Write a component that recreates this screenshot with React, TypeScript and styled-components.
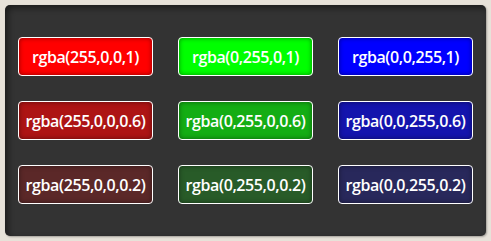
import React from 'react';
import styled, { createGlobalStyle } from 'styled-components';

const Global = createGlobalStyle`
  html, body {
    margin: 0;
    padding: 0;
    background: #e7e2d9;
  }
  body {
    font-family: "Open Sans", "Liberation Sans", sans-serif;
  }
`

const Page = styled.div`
  width: 491px;
  height: 241px;
  padding: 5px;
  box-sizing: border-box;
`

const Panel = styled.div`
  width: 481px;
  height: 231px;
  box-sizing: border-box;
  background: #333333;
  border-radius: 5px;
  box-shadow: inset 3px 3px 6px rgba(0, 0, 0, 0.45), 1px 1px 2px rgba(0, 0, 0, 0.3);
  padding: 32px 12px 0 13px;
  display: grid;
  grid-template-columns: repeat(3, 135px);
  grid-auto-rows: 39px;
  column-gap: 25px;
  row-gap: 25px;
`

const Swatch = styled.div<{ $bg: string }>`
  background: ${p => p.$bg};
  border: 1px solid #ffffff;
  border-radius: 4px;
  box-sizing: border-box;
  box-shadow: inset 0 0 5px rgba(0, 0, 0, 0.45);
  color: #ffffff;
  font-size: 16px;
  font-weight: 600;
  letter-spacing: -0.4px;
  display: flex;
  align-items: center;
  justify-content: center;
`

const colours = [
  'rgba(255,0,0,1)', 'rgba(0,255,0,1)', 'rgba(0,0,255,1)',
  'rgba(255,0,0,0.6)', 'rgba(0,255,0,0.6)', 'rgba(0,0,255,0.6)',
  'rgba(255,0,0,0.2)', 'rgba(0,255,0,0.2)', 'rgba(0,0,255,0.2)',
];

const App = () => (
  <Page>
    <Global />
    <Panel>
      {colours.map(c => (
        <Swatch key={c} $bg={c}>{c}</Swatch>
      ))}
    </Panel>
  </Page>
);

export default App;
